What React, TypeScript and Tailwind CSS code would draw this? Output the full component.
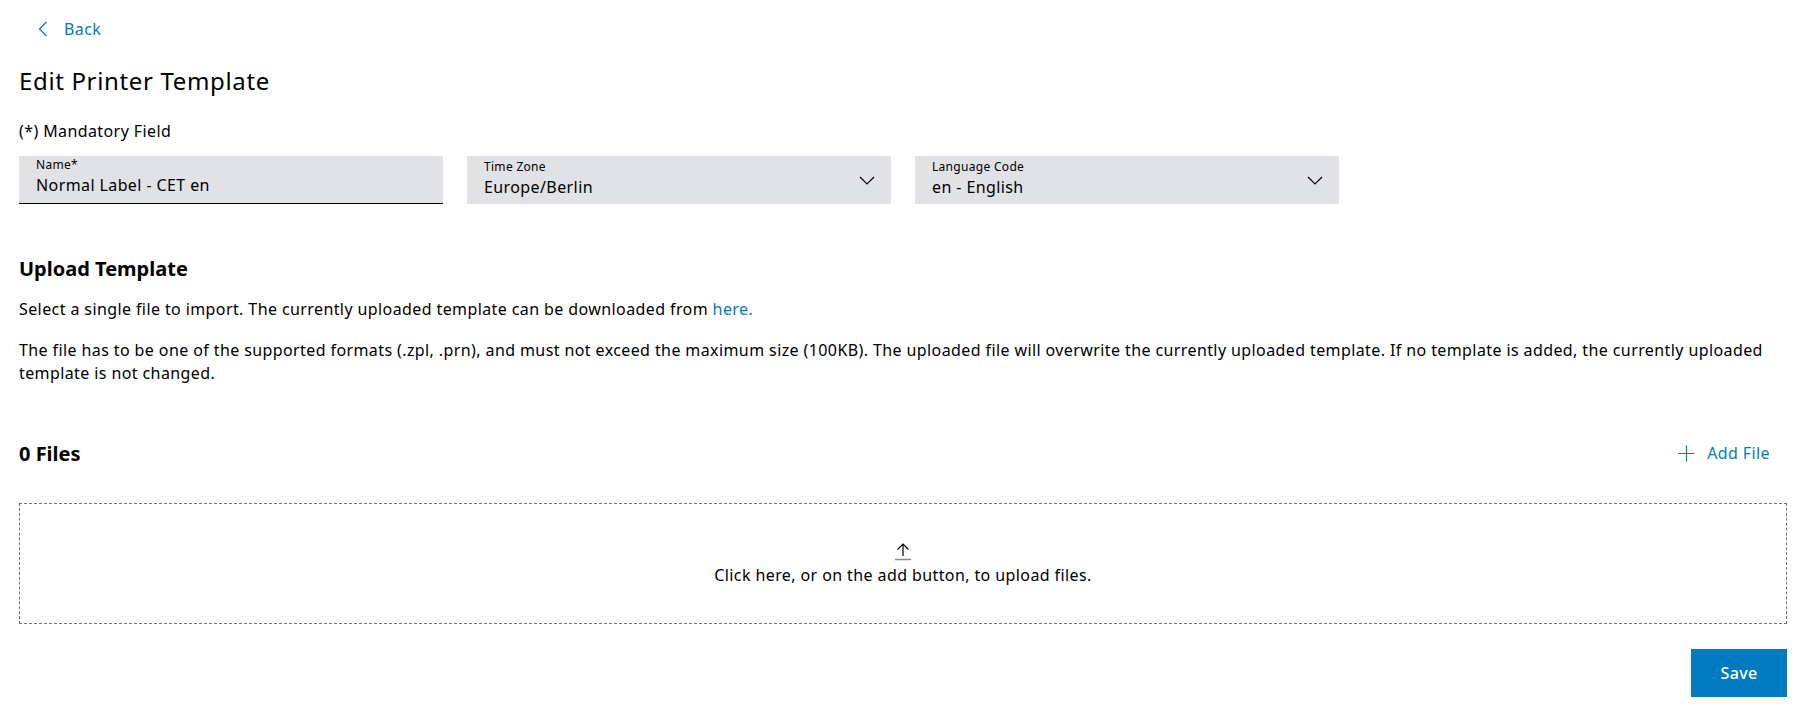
import React from "react";

function ChevronLeft() {
  return (
    <svg width="10" height="16" viewBox="0 0 10 16" fill="none" className="shrink-0">
      <path d="M8.5 1 L1.5 8 L8.5 15" stroke="#007bc0" strokeWidth="1.2" />
    </svg>
  );
}

function ChevronDown() {
  return (
    <svg width="16" height="9" viewBox="0 0 16 9" fill="none" className="shrink-0">
      <path d="M1 1 L8 8 L15 1" stroke="#000" strokeWidth="1.2" />
    </svg>
  );
}

function PlusIcon() {
  return (
    <svg width="17" height="17" viewBox="0 0 17 17" fill="none" className="shrink-0">
      <path d="M8.5 0.5 V16.5 M0.5 8.5 H16.5" stroke="#007bc0" strokeWidth="1.2" />
    </svg>
  );
}

function UploadIcon() {
  return (
    <svg width="16" height="18" viewBox="0 0 16 18" fill="none">
      <path d="M8 1 V13 M2.5 6.5 L8 1 L13.5 6.5" stroke="#000" strokeWidth="1.2" />
      <path d="M0 16.5 H16" stroke="#8a8a8a" strokeWidth="1.5" />
    </svg>
  );
}

function SelectField({ label, value }: { label: string; value: string }) {
  return (
    <div className="flex h-12 w-[424px] items-center justify-between bg-[#e0e2e5] pl-[17px] pr-4">
      <div className="self-start pt-[4px]">
        <div className="text-[12px] leading-[14px] tracking-[0.3px]">{label}</div>
        <div className="mt-[1px] text-base leading-6 tracking-[0.4px]">{value}</div>
      </div>
      <ChevronDown />
    </div>
  );
}

export default function App() {
  return (
    <div className="min-h-screen bg-white pl-[19px] pr-[20px] pt-[17px] font-['Noto_Sans',sans-serif] text-black">
      <button className="flex items-center gap-4 pl-[19px] text-base leading-6 tracking-[0.4px] text-[#007bc0]">
        <ChevronLeft />
        <span>Back</span>
      </button>

      <h1 className="mt-[24px] text-[24px] font-normal leading-8 tracking-[0.65px]">Edit Printer Template</h1>

      <p className="mt-[22px] text-base leading-6 tracking-[0.4px]">(*) Mandatory Field</p>

      <div className="mt-[13px] flex gap-6">
        <div className="h-12 w-[424px] border-b border-black bg-[#e0e2e5] px-[17px] pt-[2px]">
          <div className="text-[12px] leading-[14px] tracking-[0.3px]">Name*</div>
          <div className="mt-[1px] text-base leading-6 tracking-[0.4px]">Normal Label - CET en</div>
        </div>
        <SelectField label="Time Zone" value="Europe/Berlin" />
        <SelectField label="Language Code" value="en - English" />
      </div>

      <h2 className="mt-[51px] text-[20px] font-bold leading-7">Upload Template</h2>

      <p className="mt-[15px] text-base leading-[23px] tracking-[0.4px]">
        Select a single file to import. The currently uploaded template can be downloaded from{" "}
        <a className="text-[#007bc0]">here.</a>
      </p>

      <p className="mt-[18px] text-base leading-[23px] tracking-[0.4px]">
        The file has to be one of the supported formats (.zpl, .prn), and must not exceed the maximum size (100KB). The
        uploaded file will overwrite the currently uploaded template. If no template is added, the currently uploaded
        template is not changed.
      </p>

      <div className="mt-[53px] flex items-start justify-between">
        <h3 className="mt-[2px] text-[20px] font-bold leading-7">0 Files</h3>
        <button className="mr-[17px] mt-[3px] flex items-center gap-3 text-base leading-6 tracking-[0.4px] text-[#007bc0]">
          <PlusIcon />
          <span>Add File</span>
        </button>
      </div>

      <div className="mt-[35px] flex h-[121px] flex-col items-center border border-dashed border-[#6f7378] pt-[39px]">
        <UploadIcon />
        <div className="mt-[2px] text-base leading-6 tracking-[0.4px]">
          Click here, or on the add button, to upload files.
        </div>
      </div>

      <div className="mt-[25px] flex justify-end">
        <button className="h-12 w-24 bg-[#007bc0] text-base font-medium leading-6 tracking-[0.3px] text-white">
          Save
        </button>
      </div>
    </div>
  );
}
